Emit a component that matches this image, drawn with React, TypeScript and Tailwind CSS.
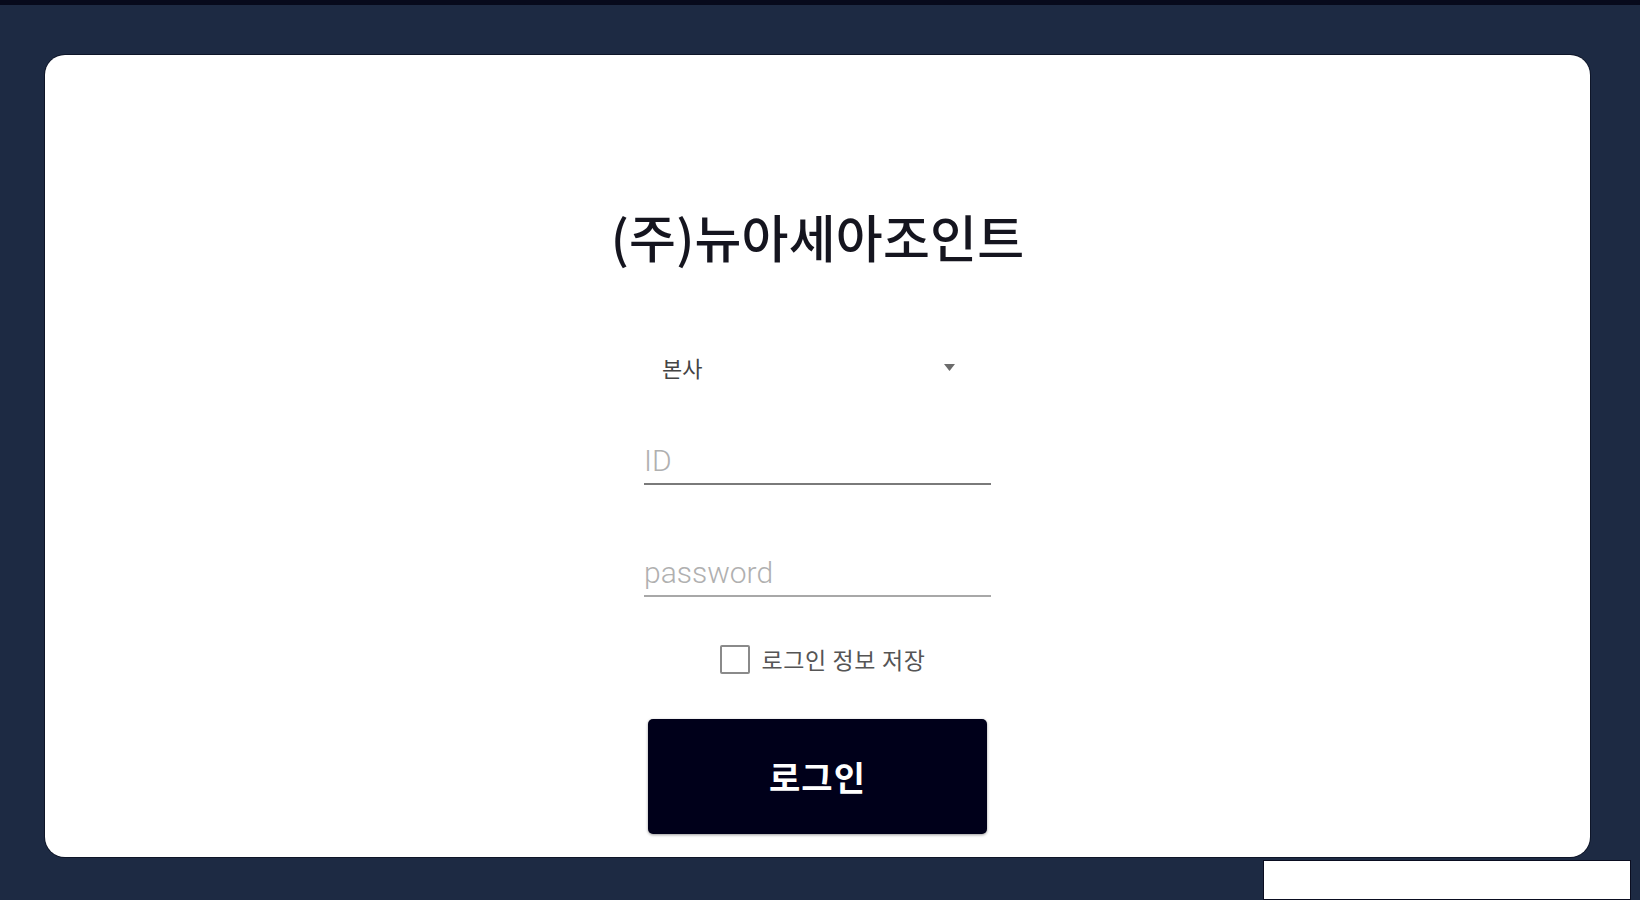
import React, { useState } from 'react';

const KR = { fontFamily: '"Noto Sans CJK KR", "Noto Sans", sans-serif' };
const RB = { fontFamily: 'Roboto, "Noto Sans CJK KR", sans-serif' };

export default function App() {
    const [branch] = useState('본사');
    const [remember, setRemember] = useState(false);

    return (
        <div className="h-[900px] w-full bg-[#1d2a43] flex flex-col overflow-hidden">
            {/* top edge */}
            <div className="h-[5px] bg-[#070a1c]" />

            {/* login card */}
            <div className="mt-[50px] ml-[45px] mr-[50px] h-[803px] bg-white rounded-[20px] shadow-[0_0_0_1px_rgba(5,8,24,0.6)] flex flex-col items-center pt-[156px]">
                <h1 className="text-[51px] leading-none font-medium text-[#15151f] tracking-[0.2px]" style={KR}>
                    (주)뉴아세아조인트
                </h1>

                <div className="w-[347px] flex flex-col mt-[85px]">
                    {/* branch select */}
                    <div className="h-[40px] flex items-center justify-between pl-[18px] pr-[36px] cursor-pointer">
                        <span className="text-[22px] text-[#444]" style={KR}>{branch}</span>
                        <svg width="11" height="7" viewBox="0 0 11 7">
                            <path d="M0 0 L11 0 L5.5 7 Z" fill="#6b6b6b" />
                        </svg>
                    </div>

                    {/* id */}
                    <input
                        type="text"
                        placeholder="ID"
                        className="mt-[54px] h-[44px] w-full bg-transparent outline-none border-b-2 border-[#7a7a7a] text-[30px] font-light text-[#222] placeholder:text-[#b0b0b0] px-0 pb-[3px]"
                        style={RB}
                    />

                    {/* password */}
                    <input
                        type="password"
                        placeholder="password"
                        className="mt-[68px] h-[44px] w-full bg-transparent outline-none border-b-2 border-[#a8a8a8] text-[30px] font-light text-[#222] placeholder:text-[#b0b0b0] px-0 pb-[3px]"
                        style={RB}
                    />

                    {/* remember */}
                    <label className="mt-[48px] h-[28px] flex items-center justify-center gap-[12px] pl-[10px] cursor-pointer">
                        <span
                            onClick={() => setRemember(!remember)}
                            className="w-[30px] h-[29px] border-2 border-[#8a8a8a] rounded-[2px] bg-white"
                        />
                        <span className="text-[23px] text-[#555] leading-none tracking-[0.6px]" style={KR}>로그인 정보 저장</span>
                    </label>

                    {/* submit */}
                    <button
                        className="mt-[46px] self-center w-[339px] h-[115px] bg-[#00001a] rounded-[5px] shadow-[0_1px_3px_rgba(0,0,0,0.4)] text-white text-[34px] font-bold tracking-[1px]"
                        style={KR}
                    >
                        로그인
                    </button>
                </div>
            </div>

            {/* bottom right box */}
            <div className="flex justify-end pr-[9px] pt-[3px]">
                <div className="w-[368px] h-[40px] bg-white border border-[#0a0d20]" />
            </div>
        </div>
    );
}
